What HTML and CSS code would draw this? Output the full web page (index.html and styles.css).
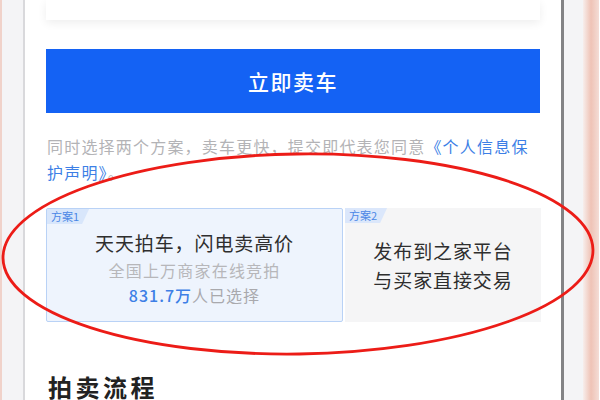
FILE: index.html
```html
<!DOCTYPE html>
<html lang="zh-CN">
<head>
  <meta charset="UTF-8">
  <meta name="viewport" content="width=device-width, initial-scale=1.0">
  <link rel="stylesheet" href="styles.css">
  <title>立即卖车</title>
</head>
<body>
  <div class="edge-pink"></div>
  <div class="edge-gray"></div>

  <div class="phone">
    <div class="top-card"></div>

    <button class="sell-btn">立即卖车</button>

    <p class="notice">
      <span class="notice-line">同时选择两个方案，卖车更快，提交即代表您同意<a class="notice-link">《个人信息保</a></span>
      <span class="notice-line"><a class="notice-link">护声明》</a>。</span>
    </p>

    <div class="plans">
      <div class="plan plan-active">
        <span class="plan-tag">方案1</span>
        <div class="plan-title">天天拍车，闪电卖高价</div>
        <div class="plan-sub">全国上万商家在线竞拍</div>
        <div class="plan-count"><span class="num">831.7万</span>人已选择</div>
      </div>
      <div class="plan plan-other">
        <span class="plan-tag">方案2</span>
        <div class="plan-title">发布到之家平台</div>
        <div class="plan-title">与买家直接交易</div>
      </div>
    </div>

    <h2 class="section-title">拍卖流程</h2>
  </div>

  <div class="edge-gray right"></div>
  <div class="edge-pink right"></div>

  <!-- hand drawn mark on the screenshot -->
  <svg class="mark" width="600" height="400" viewBox="0 0 600 400">
    <ellipse cx="298" cy="254" rx="295" ry="100" fill="none" stroke="#ec1c17" stroke-width="2.8" transform="rotate(-0.8 298 254)"/>
  </svg>
</body>
</html>
```

FILE: styles.css
```css
body {
  margin: 0;
  width: 600px;
  height: 400px;
  overflow: hidden;
  display: flex;
  font-family: "Noto Sans CJK SC", "Noto Sans", sans-serif;
  background: #fff;
  position: relative;
}

.edge-pink {
  width: 2px;
  background: #f0d2ca;
}

.edge-pink.right {
  width: 16px;
  background: linear-gradient(to right, #f7eeec, #efc3b6 50%, #f4ddd6);
}

.edge-gray {
  width: 21px;
  background: #f4f4f6;
  border-right: 2px solid #d9d9dc;
}

.edge-gray.right {
  width: 19px;
  border-right: none;
  border-left: 3px solid #838385;
}

.phone {
  width: 494px;
  padding: 0 21px;
  background: #fff;
}

.top-card {
  height: 20px;
  background: #fff;
  box-shadow: 0 3px 10px rgba(0, 0, 0, 0.07);
  margin-bottom: 29px;
}

.sell-btn {
  display: block;
  width: 100%;
  height: 64px;
  border: none;
  background: #1462f4;
  color: #fff;
  font-family: inherit;
  font-size: 21px;
  font-weight: 500;
  letter-spacing: 1.5px;
  padding: 0;
}

.notice {
  margin: 20px 0 0;
  font-size: 16px;
  line-height: 26px;
  letter-spacing: 1.2px;
  color: #b3b3b6;
  padding-left: 1px;
}

.notice-line {
  display: block;
  white-space: nowrap;
}

.notice-link {
  color: #3d7fe6;
}

.plans {
  display: grid;
  grid-template-columns: 297px 1fr;
  gap: 2px;
  margin-top: 23px;
  height: 114px;
}

.plan {
  position: relative;
  text-align: center;
  box-sizing: border-box;
}

.plan-active {
  background: #eef4fd;
  border: 1px solid #b9d2f6;
  border-radius: 2px;
  padding-top: 19px;
}

.plan-other {
  background: #f5f5f6;
  display: flex;
  flex-direction: column;
  justify-content: center;
  margin-right: -1px;
}

.plan-tag {
  position: absolute;
  top: 0;
  left: 0;
  height: 15px;
  line-height: 15px;
  padding: 0 10px 0 4px;
  font-size: 11px;
  color: #4a86e6;
  background: #d8e6fb;
  clip-path: polygon(0 0, 100% 0, calc(100% - 7px) 100%, 0 100%);
}

.plan-other .plan-tag {
  background: #dbe7fb;
}

.plan-title {
  font-size: 19px;
  line-height: 29px;
  letter-spacing: 0.9px;
  color: #2e2e2e;
}

.plan-sub {
  font-size: 16px;
  line-height: 26px;
  letter-spacing: 1.2px;
  color: #b7b7ba;
}

.plan-count {
  font-size: 16px;
  line-height: 24px;
  letter-spacing: 1px;
  color: #a9a9ad;
}

.plan-count .num {
  color: #3d7fe6;
  font-weight: 500;
}

.section-title {
  margin: 49px 0 0 2px;
  font-size: 24px;
  line-height: 32px;
  letter-spacing: 3.5px;
  font-weight: 700;
  color: #222;
}

.mark {
  position: absolute;
  top: 0;
  left: 0;
  pointer-events: none;
}
```
